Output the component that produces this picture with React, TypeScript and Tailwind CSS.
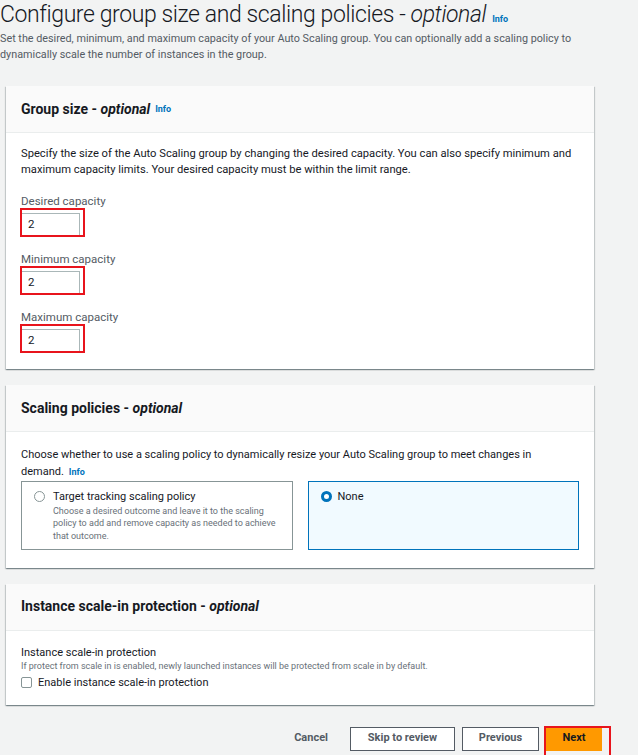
import React from "react";

const font = { fontFamily: "Roboto, 'Liberation Sans', sans-serif" };

function Info() {
  return <span className="ml-[5px] align-middle text-[9px] font-bold text-[#0073bb]">Info</span>;
}

function PanelHeader({ title, info }: { title: string; info?: boolean }) {
  return (
    <div className="flex h-[47px] items-center border-b border-[#eaeded] bg-[#fafafa] px-[15px]">
      <h2 className="text-[14px] font-bold text-[#16191f]">
        {title} - <i>optional</i>
        {info && <Info />}
      </h2>
    </div>
  );
}

function Panel({ children }: { children: React.ReactNode }) {
  return (
    <section className="bg-white shadow-[0_1px_1px_0_rgba(0,28,36,0.3),1px_1px_1px_0_rgba(0,28,36,0.15),-1px_1px_1px_0_rgba(0,28,36,0.15)]">
      {children}
    </section>
  );
}

function CapacityField({ label, top }: { label: string; top: string }) {
  return (
    <div className={top}>
      <div className="text-[11.5px] leading-[16px] text-[#545b64]">{label}</div>
      <div className="relative mt-[4px] w-[59px]">
        <div className="flex h-[24px] items-center border border-[#aab7b8] px-[6px] text-[11.5px] text-[#16191f]">2</div>
        <div className="pointer-events-none absolute -left-px -right-[5px] -top-[5px] bottom-0 border-2 border-[#e8141c]" />
      </div>
    </div>
  );
}

function Radio({ checked }: { checked?: boolean }) {
  return checked ? (
    <span className="mt-[1px] block h-[11px] w-[11px] shrink-0 rounded-full border-[3px] border-[#0073bb] bg-white" />
  ) : (
    <span className="mt-[1px] block h-[11px] w-[11px] shrink-0 rounded-full border border-[#879596] bg-white" />
  );
}

export default function App() {
  return (
    <div className="h-[755px] w-[638px] overflow-hidden bg-[#f2f3f3] text-[#16191f]" style={font}>
      <header className="pt-[1px]">
        <h1 className="h-[28px] text-[23px] font-light leading-[28px] tracking-[-0.4px] text-[#16191f]">
          Configure group size and scaling policies - <i>optional</i>
          <span className="ml-[6px] text-[9px] font-bold tracking-normal text-[#0073bb]">Info</span>
        </h1>
        <p className="mt-[2px] text-[10.8px] leading-[16px] text-[#545b64]">
          Set the desired, minimum, and maximum capacity of your Auto Scaling group. You can optionally add a scaling policy to
          <br />
          dynamically scale the number of instances in the group.
        </p>
      </header>

      <div className="ml-[6px] mt-[23px] flex w-[588px] flex-col gap-[16px]">
        <Panel>
          <PanelHeader title="Group size" info />
          <div className="px-[15px] pb-[16px] pt-[13px]">
            <p className="text-[11.2px] leading-[16px]">
              Specify the size of the Auto Scaling group by changing the desired capacity. You can also specify minimum and
              <br />
              maximum capacity limits. Your desired capacity must be within the limit range.
            </p>
            <CapacityField label="Desired capacity" top="mt-[15px]" />
            <CapacityField label="Minimum capacity" top="mt-[14px]" />
            <CapacityField label="Maximum capacity" top="mt-[14px]" />
          </div>
        </Panel>

        <Panel>
          <PanelHeader title="Scaling policies" />
          <div className="px-[15px] pb-[18px] pt-[14px]">
            <p className="text-[11px] leading-[17px]">
              Choose whether to use a scaling policy to dynamically resize your Auto Scaling group to meet changes in
              <br />
              demand.
              <Info />
            </p>
            <div className="grid grid-cols-2 gap-[15px]">
              <div className="flex h-[69px] gap-[8px] border border-[#879596] px-[12px] pt-[8px]">
                <Radio />
                <div>
                  <div className="text-[11px] leading-[14px]">Target tracking scaling policy</div>
                  <div className="mt-[1px] whitespace-nowrap text-[9px] leading-[12.5px] text-[#687078]">
                    Choose a desired outcome and leave it to the scaling
                    <br />
                    policy to add and remove capacity as needed to achieve
                    <br />
                    that outcome.
                  </div>
                </div>
              </div>
              <div className="flex h-[69px] gap-[6px] border border-[#0073bb] bg-[#f1faff] px-[12px] pt-[8px]">
                <Radio checked />
                <div className="text-[11px] leading-[14px]">None</div>
              </div>
            </div>
          </div>
        </Panel>

        <Panel>
          <PanelHeader title="Instance scale-in protection" />
          <div className="px-[15px] pb-[14px] pt-[14px]">
            <div className="text-[11px] leading-[15px]">Instance scale-in protection</div>
            <div className="text-[9px] leading-[13px] text-[#687078]">
              If protect from scale in is enabled, newly launched instances will be protected from scale in by default.
            </div>
            <label className="mt-[2px] flex items-center gap-[6px] text-[11px] leading-[16px]">
              <span className="block h-[11px] w-[11px] rounded-[2px] border border-[#879596] bg-white" />
              Enable instance scale-in protection
            </label>
          </div>
        </Panel>
      </div>

      <div className="mt-[22px] flex items-center justify-end pr-[36px] text-[11px] font-bold">
        <span className="mr-[22px] text-[#545b64]">Cancel</span>
        <button className="h-[24px] w-[105px] border border-[#545b64] bg-white text-[#545b64]">Skip to review</button>
        <button className="ml-[7px] h-[24px] w-[77px] border border-[#545b64] bg-white text-[#545b64]">Previous</button>
        <div className="relative ml-[7px]">
          <button className="h-[24px] w-[56px] bg-[#ff9900] text-[#16191f]">Next</button>
          <div className="pointer-events-none absolute -left-[2px] -right-[9px] -top-[1px] -bottom-[7px] border-2 border-[#e8141c]" />
        </div>
      </div>
    </div>
  );
}
